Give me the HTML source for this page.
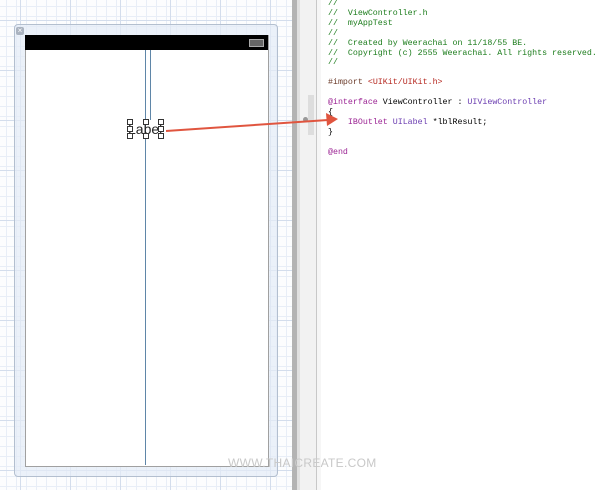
<!DOCTYPE html>
<html><head><style>
body{margin:0;width:600px;height:490px;overflow:hidden;background:#fff;position:relative;font-family:"Liberation Sans",sans-serif}
.grid{position:absolute;left:0;top:0;width:292px;height:490px;background-color:#fcfdfe;
background-image:linear-gradient(#d3ddec 1px,transparent 1px),linear-gradient(90deg,#d3ddec 1px,transparent 1px),linear-gradient(#e8eef7 1px,transparent 1px),linear-gradient(90deg,#e8eef7 1px,transparent 1px);
background-size:50px 50px,50px 50px,10px 10px,10px 10px;background-position:0 -30px,-30px 0,0 -4px,-4px 0}
.frame{position:absolute;left:14px;top:24px;width:262px;height:451px;border:1px solid #b3bfcf;border-radius:4px;background:rgba(228,235,246,.7)}
.close{position:absolute;left:16px;top:27px;width:8px;height:8px;background:#aab3c0;border-radius:2px;color:#fff;font-size:8px;line-height:8px;text-align:center}
.screen{position:absolute;left:25px;top:35px;width:242px;height:430px;background:#fff;border:1px solid #a0a0a0}
.status{position:absolute;left:25px;top:35px;width:243px;height:15px;background:#000}
.bat{position:absolute;left:249px;top:39px;width:13px;height:6px;border:1px solid #aaa;background:#666}
.v{position:absolute;width:1px;background:#5f86a8}
.h{position:absolute;width:4px;height:4px;border:1px solid #333;background:#fff}
.code{position:absolute;left:328px;top:-1px;font-family:"Liberation Mono",monospace;font-size:8.3px;line-height:9.9px;white-space:pre;color:#000}
.c{color:#1d7d1d}.p{color:#9b2393}.s{color:#b5271f}.t{color:#6a3cb0}
</style></head><body>
<div class="grid"></div>
<div class="frame"></div>
<div class="close">×</div>
<div class="screen"></div>
<div class="status"></div>
<div class="bat"></div>
<div class="v" style="left:145px;top:50px;height:415px"></div>
<div class="v" style="left:150px;top:50px;height:70px"></div>
<div style="position:absolute;left:128px;top:121px;font-size:14px;color:#222">Label</div>
<div class="h" style="left:127px;top:119px"></div><div class="h" style="left:143px;top:119px"></div><div class="h" style="left:158px;top:119px"></div>
<div class="h" style="left:127px;top:126px"></div><div class="h" style="left:158px;top:126px"></div>
<div class="h" style="left:127px;top:133px"></div><div class="h" style="left:143px;top:133px"></div><div class="h" style="left:158px;top:133px"></div>
<div style="position:absolute;left:292px;top:0;width:5px;height:490px;background:#b3b3b3"></div>
<div style="position:absolute;left:297px;top:0;width:3px;height:490px;background:#e0e0e0"></div>
<div style="position:absolute;left:300px;top:0;width:16px;height:490px;background:#f2f2f2"></div>
<div style="position:absolute;left:308px;top:95px;width:6px;height:40px;background:#ddd"></div>
<div style="position:absolute;left:316px;top:0;width:1px;height:490px;background:#c8c8c8"></div>
<div style="position:absolute;left:317px;top:0;width:4px;height:490px;background:#f6f6f6"></div>
<div style="position:absolute;left:303px;top:117px;width:5px;height:5px;border-radius:50%;background:#999"></div>
<svg style="position:absolute;left:0;top:0" width="600" height="490"><line x1="166" y1="131" x2="328" y2="120" stroke="#e0553f" stroke-width="2"/><polygon points="338,119 326,113 327,126" fill="#e0553f"/></svg>
<div class="code"><span class="c">//
//  ViewController.h
//  myAppTest
//
//  Created by Weerachai on 11/18/55 BE.
//  Copyright (c) 2555 Weerachai. All rights reserved.
//</span>

<span style="color:#6b3b2a">#import</span> <span class="s">&lt;UIKit/UIKit.h&gt;</span>

<span class="p">@interface</span> ViewController : <span class="t">UIViewController</span>
{
    <span class="p">IBOutlet</span> <span class="t">UILabel</span> *lblResult;
}

<span class="p">@end</span></div>
<div style="position:absolute;left:228px;top:456px;font-size:12px;color:#c8c8c8;letter-spacing:0.3px">WWW.THAICREATE.COM</div>
</body></html>
